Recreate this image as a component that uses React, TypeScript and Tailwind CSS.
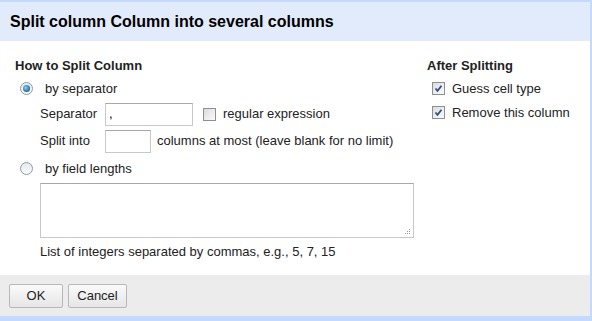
import React from "react";

const font = { fontFamily: '"Liberation Sans", Arial, sans-serif' };

function Radio({ checked }: { checked?: boolean }) {
  return (
    <span className="flex h-[13px] w-[13px] items-center justify-center rounded-full border border-[#8f9aa6] bg-gradient-to-b from-[#e6e9ec] to-[#fafbfc]">
      {checked && <span className="h-[7px] w-[7px] rounded-full bg-[radial-gradient(circle_at_40%_40%,#8fd0f0,#1f6aa0_70%,#0d3d63)]" />}
    </span>
  );
}

function Check({ checked }: { checked?: boolean }) {
  return (
    <span className="flex h-[13px] w-[13px] items-center justify-center border border-[#8e8f8f] bg-gradient-to-br from-[#dcdcdc] to-[#fbfbfb]">
      {checked && (
        <svg width="9" height="9" viewBox="0 0 9 9">
          <path d="M1.5 4.5 L3.5 6.8 L7.5 1.8" fill="none" stroke="#2e4f8a" strokeWidth="1.8" />
        </svg>
      )}
    </span>
  );
}

export default function App() {
  return (
    <div className="h-[321px] w-[592px] overflow-hidden bg-white text-[13px] text-[#222]" style={font}>
      <div className="flex h-full flex-col border-t-2 border-r-2 border-b-[5px] border-[#c3d9ff]">
        {/* header */}
        <div className="flex h-[39px] items-center bg-[#e1ebfb] pl-[10px] text-[16px] font-bold text-black">
          Split column Column into several columns
        </div>

        {/* body */}
        <div className="flex flex-1 pl-[15px] pt-[17px]">
          <div className="w-[412px]">
            <div className="font-bold leading-[16px]">How to Split Column</div>
            <div className="mt-[5px] flex items-center gap-[12px] pl-[5px]">
              <Radio checked />
              <span>by separator</span>
            </div>
            <div className="mt-[4px] flex items-center pl-[25px]">
              <span className="w-[65px]">Separator</span>
              <span className="flex h-[23px] w-[88px] items-center border border-[#c8c8c8] border-t-[#a8a8a8] pl-[3px] text-black">,</span>
              <span className="ml-[10px]"><Check /></span>
              <span className="ml-[7px]">regular expression</span>
            </div>
            <div className="mt-[4px] flex items-center pl-[25px]">
              <span className="w-[65px]">Split into</span>
              <span className="h-[23px] w-[46px] border border-[#c8c8c8] border-t-[#a8a8a8]" />
              <span className="ml-[6px]">columns at most (leave blank for no limit)</span>
            </div>
            <div className="mt-[6px] flex items-center gap-[12px] pl-[5px]">
              <Radio />
              <span>by field lengths</span>
            </div>
            <div className="relative ml-[25px] mt-[5px] h-[55px] w-[374px] border border-[#c8c8c8] border-t-[#a8a8a8]">
              <svg className="absolute bottom-[2px] right-[2px]" width="7" height="7" viewBox="0 0 7 7">
                <g fill="#9a9a9a">
                  <rect x="5" y="1" width="1" height="1" />
                  <rect x="3" y="3" width="1" height="1" />
                  <rect x="5" y="3" width="1" height="1" />
                  <rect x="1" y="5" width="1" height="1" />
                  <rect x="3" y="5" width="1" height="1" />
                  <rect x="5" y="5" width="1" height="1" />
                </g>
              </svg>
            </div>
            <div className="ml-[25px] mt-[4px]">List of integers separated by commas, e.g., 5, 7, 15</div>
          </div>

          <div>
            <div className="font-bold leading-[16px]">After Splitting</div>
            <div className="mt-[5px] flex items-center gap-[7px] pl-[5px]">
              <Check checked />
              <span>Guess cell type</span>
            </div>
            <div className="mt-[4px] flex items-center gap-[7px] pl-[5px]">
              <Check checked />
              <span>Remove this column</span>
            </div>
          </div>
        </div>

        {/* footer */}
        <div className="flex h-[41px] items-center gap-[5px] bg-[#ececec] pl-[9px]">
          <button className="h-[24px] w-[54px] rounded-[2px] border border-[#b8b8b8] bg-gradient-to-b from-[#fafafa] to-[#e6e6e6] text-[13px] text-[#222]">
            OK
          </button>
          <button className="h-[24px] w-[59px] rounded-[2px] border border-[#b8b8b8] bg-gradient-to-b from-[#fafafa] to-[#e6e6e6] text-[13px] text-[#222]">
            Cancel
          </button>
        </div>
      </div>
    </div>
  );
}
